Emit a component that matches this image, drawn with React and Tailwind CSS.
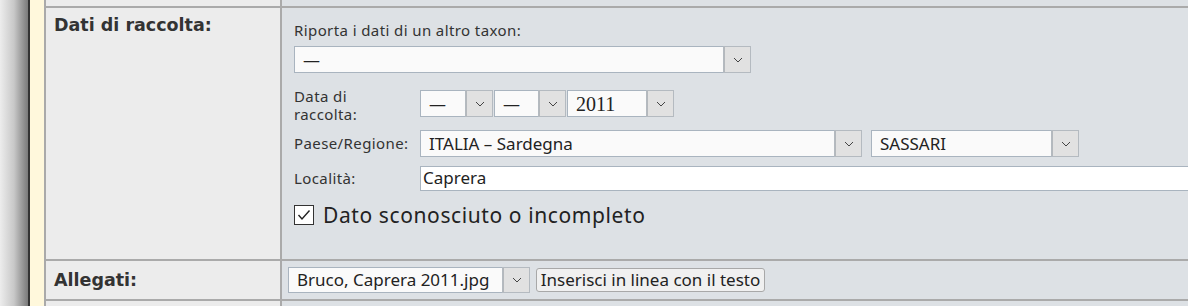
import React from "react";

const sans = { fontFamily: '"Noto Sans", "Open Sans", sans-serif' };

const Chevron = () => (
  <svg width="10" height="6" viewBox="0 0 10 6" className="text-[#444]">
    <polyline points="1,1 5,5 9,1" fill="none" stroke="currentColor" strokeWidth="1" />
  </svg>
);

const Select = ({ value, className = "", textClass = "", textStyle }) => {
  return (
    <div className={`flex border border-[#a9b4bf] bg-[#fafafa] ${className}`}>
      <div
        className={`flex-1 flex items-center pl-[8px] text-[17px] text-[#222] overflow-hidden whitespace-nowrap ${textClass}`}
        style={textStyle}
      >
        {value}
      </div>
      <div className="w-[26px] flex items-center justify-center bg-[#e1e1e1] border-l border-[#b4b8bc] outline outline-1 outline-[#b4bac0]">
        <Chevron />
      </div>
    </div>
  );
};

const App = () => {
  return (
    <div className="flex h-[306px] w-[1188px] overflow-hidden bg-[#dde1e5]" style={sans}>
      <div className="w-[28px] bg-gradient-to-r from-[#ededed] via-[#c8c8c8] to-[#7a7a7a]" />
      <div className="w-[2px] bg-[#333]" />
      <div className="w-[14px] bg-[#fff8dc]" />
      <div className="w-[2px] bg-[#aaa]" />
      <div className="flex-1 flex flex-col">
        {/* top row remainder */}
        <div className="flex h-[8px] border-b-2 border-[#aaa]">
          <div className="w-[236px] bg-[#ececec] border-r-2 border-[#aaa]" />
          <div className="flex-1" />
        </div>

        {/* Dati di raccolta */}
        <div className="flex h-[253px] border-b-2 border-[#aaa]">
          <div className="w-[236px] bg-[#ececec] border-r-2 border-[#aaa] pl-[8px] pt-[7px]">
            <h3
              className="text-[17.5px] font-bold leading-[20px] text-[#333]"
              style={{ fontFamily: '"DejaVu Sans", Verdana, sans-serif' }}
            >
              Dati di raccolta:
            </h3>
          </div>
          <div className="flex-1 pl-[12px] pt-[12px] text-[#333]">
            <p className="text-[15px] leading-[20px] tracking-[0.4px]">Riporta i dati di un altro taxon:</p>
            <Select value="—" className="mt-[6px] w-[457px] h-[27px]" />

            <div className="flex items-center mt-[17px] h-[27px]">
              <div className="w-[126px] text-[15px] leading-[18px] tracking-[0.4px] pt-[2px]">
                <div>Data di</div>
                <div>raccolta:</div>
              </div>
              <div className="flex gap-[1px]">
                <Select value="—" className="w-[73px] h-[27px]" />
                <Select value="—" className="w-[72px] h-[27px]" />
                <Select
                  value="2011"
                  className="w-[107px] h-[27px]"
                  textClass="text-[20px]"
                  textStyle={{ fontFamily: '"Liberation Serif", serif' }}
                />
              </div>
            </div>

            <div className="flex items-center mt-[13px] h-[27px]">
              <div className="w-[126px] text-[15px] tracking-[0.4px]">Paese/Regione:</div>
              <Select value="ITALIA – Sardegna" className="w-[442px] h-[27px]" />
              <Select value="SASSARI" className="w-[208px] h-[27px] ml-[9px]" />
            </div>

            <div className="flex items-center mt-[9px] h-[24px]">
              <div className="w-[126px] text-[15px] tracking-[0.4px]">Località:</div>
              <input
                readOnly
                value="Caprera"
                className="flex-1 h-[25px] border border-[#a9b4bf] border-r-0 bg-white px-[2px] text-[17px] text-[#222] outline-none"
                style={sans}
              />
            </div>

            <label className="flex items-center mt-[15px] h-[20px]">
              <span className="w-[20px] h-[20px] border border-[#333] bg-white flex items-center justify-center">
                <svg width="14" height="12" viewBox="0 0 14 12">
                  <polyline points="1.5,6 5,10 12.5,1.5" fill="none" stroke="#222" strokeWidth="1.4" />
                </svg>
              </span>
              <span className="ml-[9px] text-[21px] leading-[22px] tracking-[0.6px] text-[#222]">
                Dato sconosciuto o incompleto
              </span>
            </label>
          </div>
        </div>

        {/* Allegati */}
        <div className="flex h-[40px] border-b-2 border-[#aaa]">
          <div className="w-[236px] bg-[#ececec] border-r-2 border-[#aaa] pl-[8px] flex items-center">
            <h3
              className="text-[17.5px] font-bold leading-[20px] text-[#333]"
              style={{ fontFamily: '"DejaVu Sans", Verdana, sans-serif' }}
            >
              Allegati:
            </h3>
          </div>
          <div className="flex-1 flex items-center pl-[6px] gap-[6px]">
            <Select value="Bruco, Caprera 2011.jpg" className="w-[242px] h-[26px]" />
            <button className="h-[24px] w-[229px] rounded-[3px] border border-[#a8a8a8] bg-[#f0f0f0] text-[17px] leading-[20px] text-[#222] whitespace-nowrap">
              Inserisci in linea con il testo
            </button>
          </div>
        </div>

        <div className="flex flex-1">
          <div className="w-[236px] bg-[#ececec] border-r-2 border-[#aaa]" />
          <div className="flex-1" />
        </div>
      </div>
    </div>
  );
};

export default App;
